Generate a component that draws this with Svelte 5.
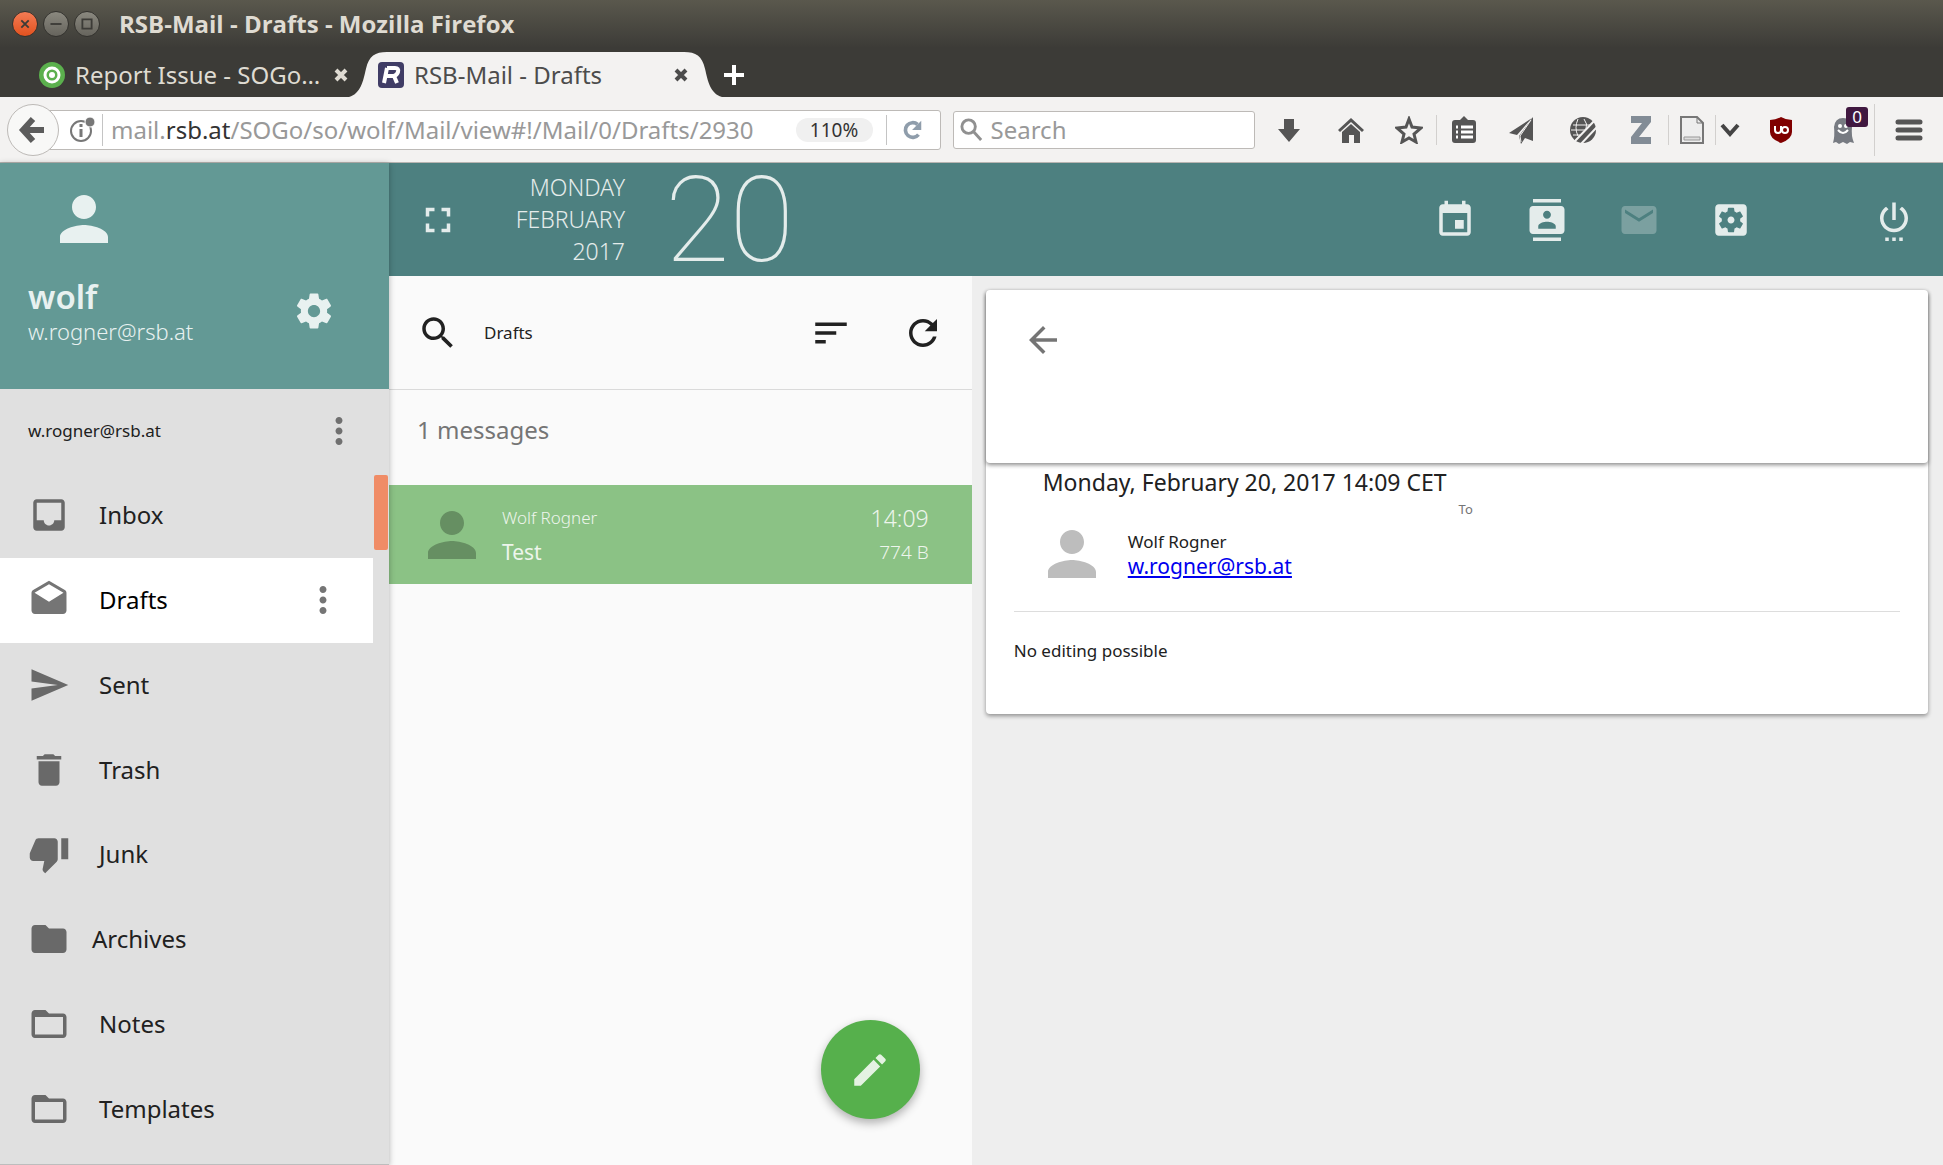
<script>
  const icons = {
    person: 'M12 12c2.21 0 4-1.79 4-4s-1.79-4-4-4-4 1.79-4 4 1.79 4 4 4zm0 2c-2.67 0-8 1.34-8 4v2h16v-2c0-2.66-5.33-4-8-4z',
    gear: 'M19.43 12.98c.04-.32.07-.64.07-.98s-.03-.66-.07-.98l2.11-1.65c.19-.15.24-.42.12-.64l-2-3.46c-.12-.22-.39-.3-.61-.22l-2.49 1c-.52-.4-1.08-.73-1.69-.98l-.38-2.65C14.46 2.18 14.25 2 14 2h-4c-.25 0-.46.18-.49.42l-.38 2.65c-.61.25-1.17.59-1.69.98l-2.49-1c-.23-.09-.49 0-.61.22l-2 3.46c-.13.22-.07.49.12.64l2.11 1.65c-.04.32-.07.65-.07.98s.03.66.07.98l-2.11 1.65c-.19.15-.24.42-.12.64l2 3.46c.12.22.39.3.61.22l2.49-1c.52.4 1.08.73 1.69.98l.38 2.65c.03.24.24.42.49.42h4c.25 0 .46-.18.49-.42l.38-2.65c.61-.25 1.17-.59 1.69-.98l2.49 1c.23.09.49 0 .61-.22l2-3.46c.12-.22.07-.49-.12-.64l-2.11-1.65zM12 15.5c-1.93 0-3.5-1.57-3.5-3.5s1.57-3.5 3.5-3.5 3.5 1.57 3.5 3.5-1.57 3.5-3.5 3.5z',
    more: 'M12 8c1.1 0 2-.9 2-2s-.9-2-2-2-2 .9-2 2 .9 2 2 2zm0 2c-1.1 0-2 .9-2 2s.9 2 2 2 2-.9 2-2-.9-2-2-2zm0 6c-1.1 0-2 .9-2 2s.9 2 2 2 2-.9 2-2-.9-2-2-2z',
    inbox: 'M19 3H5c-1.1 0-2 .9-2 2v14c0 1.1.89 2 2 2h14c1.1 0 2-.9 2-2V5c0-1.1-.9-2-2-2zm0 12h-4c0 1.66-1.35 3-3 3s-3-1.34-3-3H5V5h14v10z',
    drafts: 'M21.99 8c0-.72-.37-1.35-.94-1.7L12 1 2.95 6.3C2.38 6.65 2 7.28 2 8v10c0 1.1.9 2 2 2h16c1.1 0 2-.9 2-2l-.01-10zM12 13L3.74 7.84 12 3l8.26 4.84L12 13z',
    send: 'M2.01 21L23 12 2.01 3 2 10l15 2-15 2z',
    trash: 'M6 19c0 1.1.9 2 2 2h8c1.1 0 2-.9 2-2V7H6v12zM19 4h-3.5l-1-1h-5l-1 1H5v2h14V4z',
    junk: 'M15 3H6c-.83 0-1.54.5-1.84 1.22l-3.02 7.05c-.09.23-.14.47-.14.73v2c0 1.1.9 2 2 2h6.31l-.95 4.57-.03.32c0 .41.17.79.44 1.06L9.83 23l6.59-6.59c.36-.36.58-.86.58-1.41V5c0-1.1-.9-2-2-2zm4 0v12h4V3h-4z',
    folder: 'M10 4H4c-1.1 0-1.99.9-1.99 2L2 18c0 1.1.9 2 2 2h16c1.1 0 2-.9 2-2V8c0-1.1-.9-2-2-2h-8l-2-2z',
    folderOpen: 'M20 6h-8l-2-2H4c-1.1 0-1.99.9-1.99 2L2 18c0 1.1.9 2 2 2h16c1.1 0 2-.9 2-2V8c0-1.1-.9-2-2-2zm0 12H4V8h16v10z',
    fullscreen: 'M7 14H5v5h5v-2H7v-3zm-2-4h2V7h3V5H5v5zm12 7h-3v2h5v-5h-2v3zM14 5v2h3v3h2V5h-5z',
    calendar: 'M17 12h-5v5h5v-5zM16 1v2H8V1H6v2H5c-1.11 0-1.99.9-1.99 2L3 19c0 1.1.89 2 2 2h14c1.1 0 2-.9 2-2V5c0-1.1-.9-2-2-2h-1V1h-2zm3 18H5V8h14v11z',
    contacts: 'M20 0H4v2h16V0zM4 24h16v-2H4v2zM20 4H4c-1.1 0-2 .9-2 2v12c0 1.1.9 2 2 2h16c1.1 0 2-.9 2-2V6c0-1.1-.9-2-2-2zm-8 2.75c1.24 0 2.25 1.01 2.25 2.25s-1.01 2.25-2.25 2.25S9.75 10.24 9.75 9 10.76 6.75 12 6.75zM17 17H7v-1.5c0-1.67 3.33-2.5 5-2.5s5 .83 5 2.5V17z',
    mail: 'M20 4H4c-1.1 0-1.99.9-1.99 2L2 18c0 1.1.9 2 2 2h16c1.1 0 2-.9 2-2V6c0-1.1-.9-2-2-2zm0 4l-8 5-8-5V6l8 5 8-5v2z',
    settings: 'M12 10c-1.1 0-2 .9-2 2s.9 2 2 2 2-.9 2-2-.9-2-2-2zm7-7H5c-1.11 0-2 .9-2 2v14c0 1.1.89 2 2 2h14c1.11 0 2-.9 2-2V5c0-1.1-.89-2-2-2zm-1.75 9c0 .23-.02.46-.05.68l1.48 1.16c.13.11.17.3.08.45l-1.4 2.42c-.09.15-.27.21-.43.15l-1.74-.7c-.36.28-.76.51-1.18.69l-.26 1.85c-.03.17-.18.3-.35.3h-2.8c-.17 0-.32-.13-.35-.29l-.26-1.85c-.43-.18-.82-.41-1.18-.69l-1.74.7c-.16.06-.34 0-.43-.15l-1.4-2.42c-.09-.15-.05-.34.08-.45l1.48-1.16c-.03-.23-.05-.46-.05-.69 0-.23.02-.46.05-.68l-1.48-1.16c-.13-.11-.17-.3-.08-.45l1.4-2.42c.09-.15.27-.21.43-.15l1.74.7c.36-.28.76-.51 1.18-.69l.26-1.85c.03-.17.18-.3.35-.3h2.8c.17 0 .32.13.35.29l.26 1.85c.43.18.82.41 1.18.69l1.74-.7c.16-.06.34 0 .43.15l1.4 2.42c.09.15.05.34-.08.45l-1.48 1.16c.03.23.05.46.05.69z',
    power: 'M7 24h2v-2H7v2zm4 0h2v-2h-2v2zm2-22h-2v10h2V2zm3.56 2.44l-1.45 1.45C16.84 6.94 18 8.83 18 11c0 3.31-2.69 6-6 6s-6-2.69-6-6c0-2.17 1.16-4.06 2.88-5.12L7.44 4.44C5.36 5.88 4 8.28 4 11c0 4.42 3.58 8 8 8s8-3.58 8-8c0-2.72-1.36-5.12-3.44-6.56zM15 24h2v-2h-2v2z',
    search: 'M15.5 14h-.79l-.28-.27C15.41 12.59 16 11.11 16 9.5 16 5.91 13.09 3 9.5 3S3 5.91 3 9.5 5.91 16 9.5 16c1.61 0 3.09-.59 4.23-1.57l.27.28v.79l5 4.99L20.49 19l-4.99-5zm-6 0C7.01 14 5 11.99 5 9.5S7.01 5 9.5 5 14 7.01 14 9.5 11.99 14 9.5 14z',
    sort: 'M3 18h6v-2H3v2zM3 6v2h18V6H3zm0 7h12v-2H3v2z',
    refresh: 'M17.65 6.35C16.2 4.9 14.21 4 12 4c-4.42 0-7.99 3.58-7.99 8s3.57 8 7.99 8c3.73 0 6.84-2.55 7.73-6h-2.08c-.82 2.33-3.04 4-5.65 4-3.31 0-6-2.69-6-6s2.69-6 6-6c1.66 0 3.14.69 4.22 1.78L13 11h7V4l-2.35 2.35z',
    back: 'M20 11H7.83l5.59-5.59L12 4l-8 8 8 8 1.41-1.41L7.83 13H20v-2z',
    edit: 'M3 17.25V21h3.75L17.81 9.94l-3.75-3.75L3 17.25zM20.71 7.04c.39-.39.39-1.02 0-1.41l-2.34-2.34c-.39-.39-1.02-.39-1.41 0l-1.83 1.83 3.75 3.75 1.83-1.83z'
  }

  const folders = [
    { name: 'Inbox', icon: 'inbox' },
    { name: 'Drafts', icon: 'drafts', selected: true },
    { name: 'Sent', icon: 'send' },
    { name: 'Trash', icon: 'trash' },
    { name: 'Junk', icon: 'junk' },
    { name: 'Archives', icon: 'folder', close: true },
    { name: 'Notes', icon: 'folderOpen' },
    { name: 'Templates', icon: 'folderOpen' }
  ]

  const modules = [
    { label: 'Calendar', icon: 'calendar' },
    { label: 'Address Book', icon: 'contacts' },
    { label: 'Mail', icon: 'mail', current: true },
    { label: 'Administration', icon: 'settings' }
  ]

  let query = ''
</script>

{#snippet icon(name)}
  <svg class="icon" viewBox="0 0 24 24" aria-hidden="true"><path d={ icons[name] } /></svg>
{/snippet}

<div class="window">
  <header class="chrome">
    <div class="titlebar">
      <button class="wm wm-close" aria-label="Close window">
        <svg viewBox="0 0 26 26"><path d="M9 9l8 8M17 9l-8 8" /></svg>
      </button>
      <button class="wm" aria-label="Minimize">
        <svg viewBox="0 0 26 26"><path d="M7 13h12" /></svg>
      </button>
      <button class="wm" aria-label="Maximize">
        <svg viewBox="0 0 26 26"><path d="M8 8h10v10H8z" /></svg>
      </button>
      <span class="window-title">RSB-Mail - Drafts - Mozilla Firefox</span>
    </div>

    <div class="tabs">
      <div class="tab">
        <svg class="favicon" viewBox="0 0 26 26">
          <circle cx="13" cy="13" r="13" fill="#5bb04d" />
          <circle cx="13" cy="13" r="7" fill="none" stroke="#fff" stroke-width="3" />
          <circle cx="13" cy="13" r="3" fill="#fff" />
        </svg>
        <span class="tab-label">Report Issue - SOGo…</span>
        <button class="tab-close" aria-label="Close tab">
          <svg viewBox="0 0 14 14"><path d="M2 2l10 10M12 2L2 12" /></svg>
        </button>
      </div>
      <div class="tab tab-active">
        <svg class="tab-shape" viewBox="0 0 373 46" preserveAspectRatio="none">
          <path d="M0 46C12 42 14 30 17 17C20 4 26 0 38 0H335C347 0 353 4 356 17C359 30 361 42 373 46Z" />
        </svg>
        <svg class="favicon" viewBox="0 0 26 26">
          <rect width="26" height="26" rx="4" fill="#403d66" />
          <path d="M9 6h8q4 0 3 4q-1 3-4 4l3 7M9 6L6 21M8 14h8" fill="none" stroke="#fff" stroke-width="4" />
        </svg>
        <span class="tab-label">RSB-Mail - Drafts</span>
        <button class="tab-close" aria-label="Close tab">
          <svg viewBox="0 0 14 14"><path d="M2 2l10 10M12 2L2 12" /></svg>
        </button>
      </div>
      <button class="new-tab" aria-label="New tab">
        <svg viewBox="0 0 24 24"><path d="M12 2v20M2 12h20" /></svg>
      </button>
    </div>

    <div class="toolbar">
      <button class="go-back" aria-label="Back">
        <svg viewBox="0 0 30 30"><path d="M15 4L5 15l10 11M6 15h20" /></svg>
      </button>
      <div class="urlbar">
        <svg class="site-info" viewBox="0 0 28 28">
          <circle cx="13" cy="15" r="10" fill="none" stroke="#777" stroke-width="2" />
          <path d="M13 13v8M13 8v3" stroke="#777" stroke-width="3" />
          <circle cx="22" cy="6" r="5" fill="#777" stroke="#fff" />
        </svg>
        <span class="url">mail.<b>rsb.at</b>/SOGo/so/wolf/Mail/view#!/Mail/0/Drafts/2930</span>
        <button class="zoom-level">110%</button>
        <button class="reload" aria-label="Reload">
          <svg viewBox="0 0 24 24"><path d="M18 17a8 8 0 1 1-1-11" fill="none" stroke="#8f9dab" stroke-width="4" /><path d="M21 2v10H11z" fill="#8f9dab" /></svg>
        </button>
      </div>
      <label class="searchbar">
        <svg viewBox="0 0 26 26"><circle cx="10" cy="10" r="7" /><path d="M15 15l8 9" /></svg>
        <input type="text" placeholder="Search" aria-label="Search the web" bind:value={ query }>
      </label>
      <div class="tools">
        <button class="tool" aria-label="Downloads">
          <svg viewBox="0 0 28 28"><path d="M9 3h10v10h6L14 26 3 13h6z" /></svg>
        </button>
        <button class="tool" aria-label="Home">
          <svg viewBox="0 0 28 28"><path d="M14 2L27 14l-2 2L14 6 3 16l-2-2z" /><path d="M14 8l9 8v11h-6v-8h-5v8H5V16z" /></svg>
        </button>
        <button class="tool tool-narrow" aria-label="Bookmark">
          <svg viewBox="0 0 28 28"><path d="M14 3l3 8 9 1-7 6 2 8-7-4-7 4 2-8-7-6 9-1z" fill="none" stroke="#555" stroke-width="3" /></svg>
        </button>
        <button class="tool tool-narrow tool-split" aria-label="Bookmarks list">
          <svg viewBox="0 0 28 28"><path d="M10 4l4-4 4 4h5q3 0 3 3v17q0 3-3 3H5q-3 0-3-3V7q0-3 3-3z" /><path d="M6 11h2M11 11h12M6 16h2M11 16h12M6 21h2M11 21h12" stroke="#fff" stroke-width="3" /></svg>
        </button>
        <button class="tool" aria-label="Share">
          <svg viewBox="0 0 28 28"><path d="M26 1v24l-8-3-4 6-2-8zM25 2L10 19l-8-2z" /><path d="M24 4L13 20l1 6" fill="none" stroke="#f3f2f1" /></svg>
        </button>
        <button class="tool" aria-label="Proxy">
          <svg viewBox="0 0 28 28">
            <circle cx="14" cy="14" r="13" />
            <path d="M4 9h17M2 14h15M4 19h8M9 3q-4 9 0 17M15 3q4 5 2 10" fill="none" stroke="#f3f2f1" />
            <path d="M27 3L6 25M28 11L12 28" stroke="#f3f2f1" stroke-width="2" />
          </svg>
        </button>
        <button class="tool tool-narrow" aria-label="Zotero">
          <svg viewBox="0 0 28 28"><path d="M4 0h20v6L12 21h12v7H4v-7L15 7H4z" fill="#828c96" /></svg>
        </button>
        <button class="tool tool-page tool-split" aria-label="Save page">
          <svg viewBox="0 0 28 28"><path d="M3 1h16l6 6v20H3z" fill="#eee" stroke="#777" stroke-width="2" /><path d="M19 1v6h6" fill="none" stroke="#777" /><path d="M6 21h16v3H6z" fill="#ddd" stroke="#999" /></svg>
        </button>
        <button class="tool tool-menu tool-split" aria-label="Save options">
          <svg viewBox="0 0 20 20"><path d="M2 5l8 9 8-9" fill="none" stroke="#444" stroke-width="4" /></svg>
        </button>
        <button class="tool" aria-label="uBlock">
          <svg viewBox="0 0 28 28"><path d="M14 1q5 3 11 3v12q0 7-11 11Q3 23 3 16V4q6 0 11-3z" fill="#800000" /><path d="M8 10v4q0 3 3 3t3-3v-4" fill="none" stroke="#fff" stroke-width="2" /><circle cx="18" cy="14" r="3" fill="none" stroke="#fff" stroke-width="2" /></svg>
        </button>
        <button class="tool" aria-label="Ghostery">
          <svg viewBox="0 0 28 28"><path d="M4 27Q6 20 5 11Q6 2 14 2t9 9q-1 9 2 16l-4-1-3 2-4-2-4 2-3-2z" fill="#777b82" /><circle cx="11" cy="10" r="2" fill="#fff" /><circle cx="17" cy="10" r="2" fill="#fff" /><path d="M9 14q5 6 10 0" fill="none" stroke="#fff" stroke-width="2" /></svg>
          <span class="count">0</span>
        </button>
        <button class="tool tool-split tool-last" aria-label="Open menu">
          <svg viewBox="0 0 28 28"><path d="M3 6h22M3 14h22M3 22h22" stroke="#555" stroke-width="5" stroke-linecap="round" /></svg>
        </button>
      </div>
    </div>
  </header>

  <div class="app">
    <aside class="sidebar">
      <div class="profile">
        <span class="avatar">{@render icon('person')}</span>
        <div class="profile-row">
          <div>
            <div class="profile-name">wolf</div>
            <div class="profile-mail">w.rogner@rsb.at</div>
          </div>
          <button class="icon-button" aria-label="Preferences">{@render icon('gear')}</button>
        </div>
      </div>
      <div class="account">
        <span>w.rogner@rsb.at</span>
        <button class="icon-button" aria-label="Account menu">{@render icon('more')}</button>
      </div>
      <div class="folder-area">
        <nav class="folders">
          {#each folders as folder}
            <div class="folder" class:selected={ folder.selected }>
              <a class="folder-link" class:close={ folder.close } href="#!/Mail/0/{ folder.name }">
                {@render icon(folder.icon)}
                <span>{ folder.name }</span>
              </a>
              {#if folder.selected}
                <button class="icon-button" aria-label="Folder menu">{@render icon('more')}</button>
              {/if}
            </div>
          {/each}
        </nav>
        <div class="scrollbar"></div>
      </div>
    </aside>

    <div class="workspace">
      <div class="topbar">
        <button class="icon-button" aria-label="Fullscreen">{@render icon('fullscreen')}</button>
        <div class="date">
          <div>MONDAY</div>
          <div>FEBRUARY</div>
          <div>2017</div>
        </div>
        <div class="day">20</div>
        <nav class="modules">
          {#each modules as module}
            <a href="#!/{ module.icon }" class:current={ module.current } aria-label={ module.label }>{@render icon(module.icon)}</a>
          {/each}
        </nav>
        <button class="icon-button" aria-label="Disconnect">{@render icon('power')}</button>
      </div>

      <div class="columns">
        <section class="list">
          <div class="list-bar">
            <button class="icon-button" aria-label="Search">{@render icon('search')}</button>
            <span class="list-title">Drafts</span>
            <button class="icon-button" aria-label="Sort">{@render icon('sort')}</button>
            <button class="icon-button" aria-label="Refresh">{@render icon('refresh')}</button>
          </div>
          <div class="list-count">1 messages</div>
          <a class="message" href="#!/Mail/0/Drafts/2930">
            <span class="avatar">{@render icon('person')}</span>
            <span class="message-main">
              <span class="message-from">Wolf Rogner</span>
              <span class="message-subject">Test</span>
            </span>
            <span class="message-meta">
              <span class="message-time">14:09</span>
              <span class="message-size">774 B</span>
            </span>
          </a>
          <button class="compose" aria-label="Write a new message">{@render icon('edit')}</button>
        </section>

        <main class="reader">
          <article class="card">
            <div class="card-head">
              <button class="icon-button" aria-label="Close message">{@render icon('back')}</button>
            </div>
            <div class="card-body">
              <div class="envelope">
                <div>
                  <div class="sent-at">Monday, February 20, 2017 14:09 CET</div>
                  <div class="sender">
                    <span class="avatar">{@render icon('person')}</span>
                    <div>
                      <div class="sender-name">Wolf Rogner</div>
                      <a href="mailto:w.rogner@rsb.at">w.rogner@rsb.at</a>
                    </div>
                  </div>
                </div>
                <div class="to">To</div>
              </div>
              <p class="note">No editing possible</p>
            </div>
          </article>
        </main>
      </div>
    </div>
  </div>
</div>

<style>
  :global(body) {
    margin: 0;
  }

  * {
    box-sizing: border-box;
  }

  button {
    background: none;
    border: 0;
    color: inherit;
    font: inherit;
    padding: 0;
  }

  svg {
    display: block;
    flex: none;
  }

  .window {
    color: #212121;
    display: flex;
    flex-direction: column;
    font-family: "Noto Sans", sans-serif;
    font-size: 24px;
    line-height: 32px;
    min-height: 100vh;
  }

  /* browser */
  .chrome {
    background: #f3f2f1;
    border-bottom: 1px solid #b8b5b2;
  }

  .titlebar {
    align-items: center;
    background: linear-gradient(#5a584d, #3c3b37);
    color: #dfdbd2;
    display: flex;
    gap: 5px;
    height: 48px;
    padding: 0 12px;
  }

  .wm {
    background: linear-gradient(#8a887f, #66645d);
    border: 1px solid #33322e;
    border-radius: 50%;
    height: 26px;
    width: 26px;
  }

  .wm-close {
    background: linear-gradient(#f47b54, #e2521f);
  }

  .wm path {
    fill: none;
    stroke: #3c3b37;
    stroke-width: 2;
  }

  .window-title {
    font-family: "Open Sans", sans-serif;
    font-weight: 700;
    padding-left: 14px;
  }

  .tabs {
    align-items: center;
    background: #3c3b37;
    display: flex;
    height: 49px;
    padding: 4px 0 0 39px;
  }

  .tab {
    align-items: center;
    color: #dfdbd2;
    display: flex;
    gap: 10px;
    height: 45px;
    padding-right: 1px;
    width: 310px;
  }

  .tab-active {
    color: #4c4c4c;
    padding: 0 34px 0 29px;
    position: relative;
    width: 373px;
  }

  .tab-shape {
    fill: #f3f2f1;
    height: 100%;
    left: 0;
    position: absolute;
    top: 0;
    width: 100%;
  }

  .favicon {
    height: 26px;
    position: relative;
    width: 26px;
  }

  .tab-label {
    flex: 1;
    position: relative;
    white-space: nowrap;
  }

  .tab-close {
    position: relative;
  }

  .tab-close svg {
    height: 14px;
    width: 14px;
  }

  .tab-close path {
    stroke: currentColor;
    stroke-width: 4;
  }

  .new-tab svg {
    height: 24px;
    width: 24px;
  }

  .new-tab path {
    stroke: #fff;
    stroke-width: 4;
  }

  .toolbar {
    align-items: center;
    display: flex;
    height: 65px;
    padding-left: 7px;
  }

  .go-back {
    align-items: center;
    background: #f8f8f7;
    border: 1px solid #bdbab7;
    border-radius: 50%;
    display: flex;
    flex: none;
    height: 52px;
    justify-content: center;
    margin-right: -12px;
    position: relative;
    width: 52px;
  }

  .go-back svg {
    height: 30px;
    width: 30px;
  }

  .go-back path {
    fill: none;
    stroke: #5c5c5c;
    stroke-width: 6;
  }

  .urlbar {
    align-items: center;
    background: #fff;
    border: 1px solid #bdbab7;
    border-radius: 3px;
    color: #999;
    display: flex;
    flex: 3;
    height: 40px;
    min-width: 0;
    padding-left: 20px;
  }

  .site-info {
    height: 28px;
    width: 28px;
  }

  .url {
    border-left: 1px solid #c4c4c4;
    flex: 1;
    margin-left: 6px;
    padding-left: 8px;
    white-space: nowrap;
  }

  .url b {
    color: #333;
    font-weight: 400;
  }

  .zoom-level {
    background: #f0f0f0;
    border-radius: 12px;
    color: #333;
    font-size: 19px;
    height: 24px;
    line-height: 24px;
    width: 77px;
  }

  .reload {
    border-left: 1px solid #c4c4c4;
    display: flex;
    height: 30px;
    justify-content: center;
    margin-left: 13px;
    padding: 4px 0;
    width: 54px;
  }

  .reload svg {
    height: 22px;
    width: 22px;
  }

  .searchbar {
    align-items: center;
    background: #fff;
    border: 1px solid #bdbab7;
    border-radius: 3px;
    display: flex;
    flex: 1;
    gap: 7px;
    height: 38px;
    margin: 0 3px 0 12px;
    min-width: 0;
    padding: 0 5px;
  }

  .searchbar svg {
    fill: none;
    height: 25px;
    stroke: #909090;
    stroke-width: 3;
    width: 25px;
  }

  .searchbar input {
    background: none;
    border: 0;
    color: #333;
    font: inherit;
    min-width: 0;
    outline: 0;
    padding: 0;
    width: 100%;
  }

  .searchbar input::placeholder {
    color: #999;
    opacity: 1;
  }

  .tools {
    align-items: center;
    display: flex;
    flex: none;
  }

  .tool {
    align-items: center;
    display: flex;
    height: 30px;
    justify-content: center;
    position: relative;
    width: 62px;
  }

  .tool svg {
    fill: #555;
    height: 28px;
    width: 28px;
  }

  .tool-narrow {
    width: 54px;
  }

  .tool-split {
    border-left: 1px solid #d2d0ce;
  }

  .tool-page {
    width: 47px;
  }

  .tool-menu {
    margin-right: 7px;
    width: 28px;
  }

  .tool-menu svg {
    height: 20px;
    width: 20px;
  }

  .tool-last {
    height: 52px;
    width: 69px;
  }

  .count {
    background: #401840;
    border-radius: 3px;
    color: #fff;
    font-size: 17px;
    height: 20px;
    line-height: 20px;
    position: absolute;
    right: 6px;
    top: -8px;
    width: 22px;
  }

  /* mail */
  .app {
    display: flex;
    flex: 1;
  }

  .icon {
    fill: currentColor;
    height: 42px;
    width: 42px;
  }

  .avatar .icon {
    height: 72px;
    width: 72px;
  }

  .sidebar {
    background: #e0e0e0;
    border-bottom: 1px solid #bdbdbd;
    box-shadow: 0 1px 6px rgba(0, 0, 0, .3);
    display: flex;
    flex: none;
    flex-direction: column;
    position: relative;
    width: 389px;
    z-index: 1;
  }

  .profile {
    background: #639995;
    color: #e8f1f0;
    height: 226px;
    padding: 20px 54px 0 28px;
  }

  .profile .avatar {
    display: block;
    padding-left: 20px;
  }

  .profile-row {
    display: flex;
    justify-content: space-between;
    padding-top: 24px;
  }

  .profile-row .icon-button {
    height: 64px;
  }

  .profile-name {
    font-size: 33px;
    font-weight: 600;
    line-height: 36px;
  }

  .profile-mail {
    font-size: 22px;
    font-weight: 300;
  }

  .account {
    align-items: center;
    display: flex;
    font-size: 17px;
    height: 84px;
    justify-content: space-between;
    padding: 0 29px 0 28px;
  }

  .account .icon-button,
  .folder .icon-button {
    color: #707070;
  }

  .folder-area {
    display: flex;
  }

  .folders {
    display: grid;
    flex: 1;
    grid-auto-rows: 1fr;
    height: 678px;
  }

  .scrollbar {
    background: #f08c66;
    border-radius: 2px;
    height: 75px;
    margin: 2px 1px;
    width: 14px;
  }

  .folder {
    align-items: center;
    display: flex;
    padding: 0 29px 0 28px;
  }

  .folder-link {
    align-items: center;
    color: inherit;
    display: flex;
    flex: 1;
    gap: 29px;
    text-decoration: none;
  }

  .folder-link.close {
    gap: 22px;
  }

  .folder-link .icon {
    color: #696969;
  }

  .selected {
    background: #fff;
    color: #000;
  }

  .selected .icon {
    color: #757575;
  }

  .workspace {
    display: flex;
    flex: 1;
    flex-direction: column;
    min-width: 0;
  }

  .topbar {
    align-items: center;
    background: #4d8080;
    color: #e4eceb;
    display: flex;
    height: 113px;
    padding: 0 28px;
  }

  .date {
    font-size: 23px;
    font-weight: 300;
    padding-bottom: 1px;
    text-align: right;
    width: 166px;
  }

  .day {
    flex: 1;
    font-family: Roboto, sans-serif;
    font-size: 118px;
    font-weight: 100;
    line-height: 112px;
    padding: 2px 0 0 40px;
  }

  .modules {
    display: flex;
    gap: 50px;
    margin-right: 121px;
  }

  .modules a {
    color: inherit;
  }

  .modules .current {
    opacity: .3;
  }

  .columns {
    display: grid;
    flex: 1;
    grid-template-columns: 3fr 5fr;
  }

  .list {
    background: #fafafa;
    position: relative;
  }

  .list-bar {
    align-items: center;
    border-bottom: 1px solid #dadada;
    display: flex;
    gap: 50px;
    height: 114px;
    padding: 0 28px;
  }

  .list-title {
    flex: 1;
    font-size: 17px;
    margin-left: -25px;
  }

  .list-count {
    color: #757575;
    padding: 24px 28px 39px;
  }

  .message {
    align-items: center;
    background: #8bc285;
    color: #edf5ec;
    display: flex;
    height: 99px;
    padding: 0 43px 0 27px;
    text-decoration: none;
  }

  .message .avatar {
    color: #668f62;
  }

  .message-main,
  .message-meta {
    display: flex;
    flex-direction: column;
    gap: 2px;
  }

  .message-main {
    flex: 1;
    padding-left: 14px;
  }

  .message-meta {
    font-weight: 300;
    text-align: right;
  }

  .message-from {
    font-size: 17px;
    font-weight: 300;
  }

  .message-subject {
    font-size: 21px;
  }

  .message-time {
    font-size: 23px;
  }

  .message-size {
    font-size: 19px;
  }

  .compose {
    align-items: center;
    background: #56b04c;
    border-radius: 50%;
    bottom: 46px;
    box-shadow: 0 4px 10px rgba(0, 0, 0, .3);
    color: #e4f2e2;
    display: flex;
    height: 99px;
    justify-content: center;
    position: absolute;
    right: 52px;
    width: 99px;
  }

  .reader {
    background: #eee;
    padding: 14px 15px 14px 14px;
  }

  .card {
    background: #fff;
    border-radius: 4px;
    box-shadow: 0 2px 4px rgba(0, 0, 0, .4);
  }

  .card-head {
    border-radius: 4px;
    box-shadow: 0 2px 4px rgba(0, 0, 0, .45);
    color: #757575;
    height: 173px;
    padding: 29px 36px;
  }

  .card-body {
    padding: 3px 28px 47px;
  }

  .envelope {
    border-bottom: 1px solid #ddd;
    display: flex;
    gap: 12px;
    padding: 0 29px 21px;
  }

  .sent-at {
    font-size: 23px;
  }

  .sender {
    align-items: center;
    display: flex;
    gap: 20px;
    padding-top: 20px;
  }

  .sender .avatar {
    color: #bdbdbd;
    margin-left: -7px;
  }

  .sender-name {
    font-size: 17px;
    line-height: 24px;
  }

  .sender a {
    color: #00e;
    display: block;
    font-size: 21px;
    line-height: 24px;
  }

  .to {
    color: #757575;
    font-size: 13px;
    padding-top: 27px;
  }

  .note {
    font-size: 17px;
    margin: 0;
    padding-top: 23px;
  }
</style>
